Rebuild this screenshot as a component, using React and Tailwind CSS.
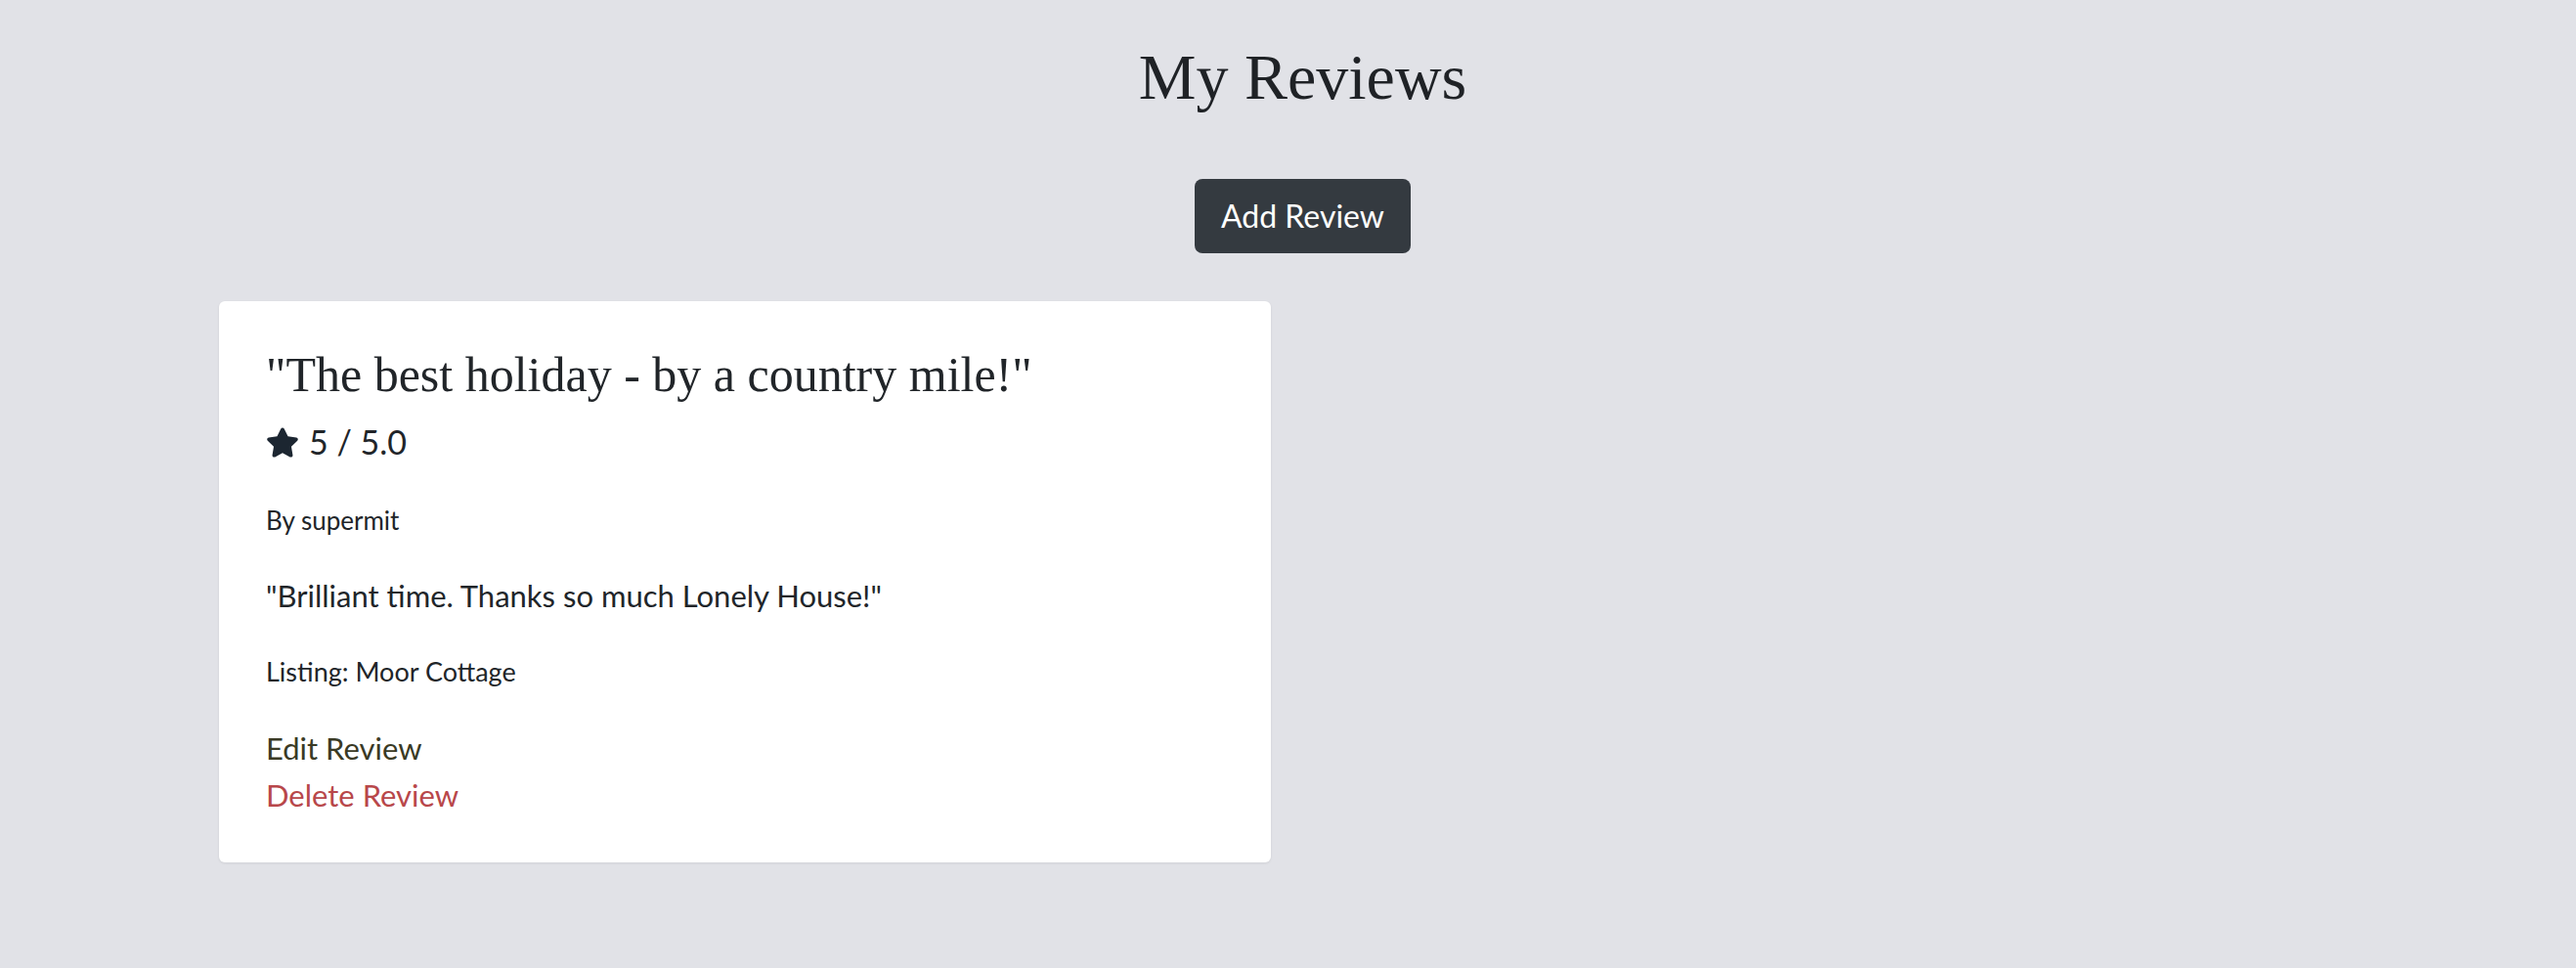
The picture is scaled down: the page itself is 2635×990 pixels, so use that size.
import React from "react";
import { FaStar } from "react-icons/fa";

const slab = { fontFamily: '"Liberation Serif", serif' };

function ReviewCard({ review }) {
  return (
    <div className="w-[1076px] rounded-md bg-white pl-12 pr-12 pt-[45px] pb-[45px] shadow-[0_1px_3px_rgba(0,0,0,0.08)]">
      <h3 className="text-[50px] leading-[1.2] text-[#212529]" style={slab}>
        "{review.title}"
      </h3>
      <div className="mt-[17px] flex items-center gap-[10px] text-[34px] leading-[1.3] text-[#212529]">
        <FaStar className="h-[33px] w-[34px] text-[#1c2631]" />
        <span>{review.rating} / 5.0</span>
      </div>
      <p className="mt-[40px] text-[26px] leading-[1.4] text-[#212529]">
        By {review.author}
      </p>
      <p className="mt-[38px] text-[31px] leading-[1.3] text-[#212529]">
        "{review.body}"
      </p>
      <p className="mt-[39px] text-[27px] leading-[1.4] text-[#212529]">
        Listing: {review.listing}
      </p>
      <div className="mt-[35px] flex flex-col text-[31px] leading-[1.55]">
        <a className="text-[#3a3a25]">Edit Review</a>
        <a className="text-[#b8474a]">Delete Review</a>
      </div>
    </div>
  );
}

export default function App() {
  const reviews = [
    {
      title: "The best holiday - by a country mile!",
      rating: 5,
      author: "supermit",
      body: "Brilliant time. Thanks so much Lonely House!",
      listing: "Moor Cottage",
    },
  ];

  return (
    <div
      className="min-h-[990px] bg-[#e1e2e7] text-[#212529]"
      style={{ fontFamily: "Lato, sans-serif" }}
    >
      <div className="flex flex-col items-center pl-[30px] pt-[39px]">
        <h1 className="text-[66px] leading-[1.2] text-[#1f2226]" style={slab}>
          My Reviews
        </h1>
        <button className="mt-[65px] h-[76px] rounded-lg bg-[#343a40] px-[27px] text-[32px] text-white">
          Add Review
        </button>
      </div>
      <div className="mt-[49px] pl-[224px]">
        {reviews.map((r, i) => (
          <ReviewCard key={i} review={r} />
        ))}
      </div>
    </div>
  );
}
